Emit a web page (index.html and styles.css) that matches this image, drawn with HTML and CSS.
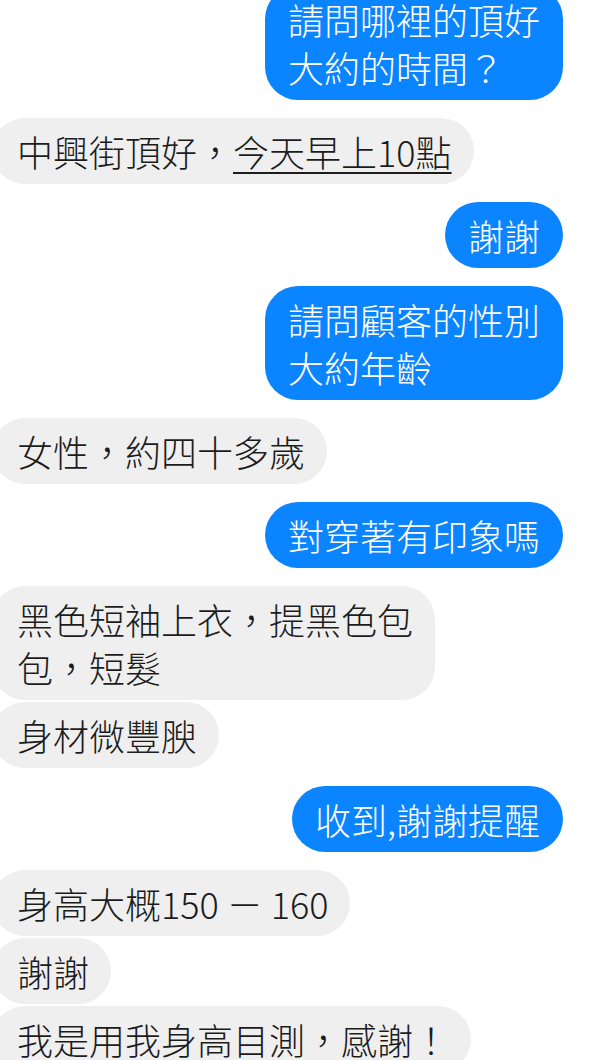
FILE: index.html
```html
<!DOCTYPE html>
<html lang="zh-Hant">
<head>
<meta charset="utf-8">
<link rel="stylesheet" href="styles.css">
</head>
<body>
<div class="chat">
  <div class="msg out">請問哪裡的頂好<br>大約的時間？</div>
  <div class="msg in">中興街頂好，<span class="link">今天早上10點</span></div>
  <div class="msg out">謝謝</div>
  <div class="msg out">請問顧客的性別<br>大約年齡</div>
  <div class="msg in">女性，約四十多歲</div>
  <div class="msg out">對穿著有印象嗎</div>
  <div class="msg in">黑色短袖上衣，提黑色包<br>包，短髮</div>
  <div class="msg in cont">身材微豐腴</div>
  <div class="msg out">收到,謝謝提醒</div>
  <div class="msg in">身高大概150 － 160</div>
  <div class="msg in cont">謝謝</div>
  <div class="msg in cont">我是用我身高目測，感謝！</div>
</div>
</body>
</html>
```
FILE: styles.css
```css
html, body {
  margin: 0;
  padding: 0;
  background: #ffffff;
}
body {
  width: 596px;
  height: 1060px;
  overflow: hidden;
  font-family: "Noto Sans CJK TC", "Noto Sans", sans-serif;
  font-weight: 300;
}
.chat {
  display: flex;
  flex-direction: column;
  margin-top: -14px;
}
.msg {
  font-size: 36px;
  line-height: 48px;
  padding: 9px 23px;
  border-radius: 33px;
  white-space: nowrap;
  margin-top: 18px;
}
.msg:first-child {
  margin-top: 0;
}
.msg.cont {
  margin-top: 2px;
}
.out {
  align-self: flex-end;
  margin-right: 33px;
  background: #0a84ff;
  color: #ffffff;
}
.in {
  align-self: flex-start;
  margin-left: -8px;
  padding-left: 25px;
  padding-right: 22px;
  background: #efefef;
  color: #1c1c1c;
}
.link {
  text-decoration: underline;
  text-decoration-thickness: 2px;
  text-underline-offset: 5px;
}
```
